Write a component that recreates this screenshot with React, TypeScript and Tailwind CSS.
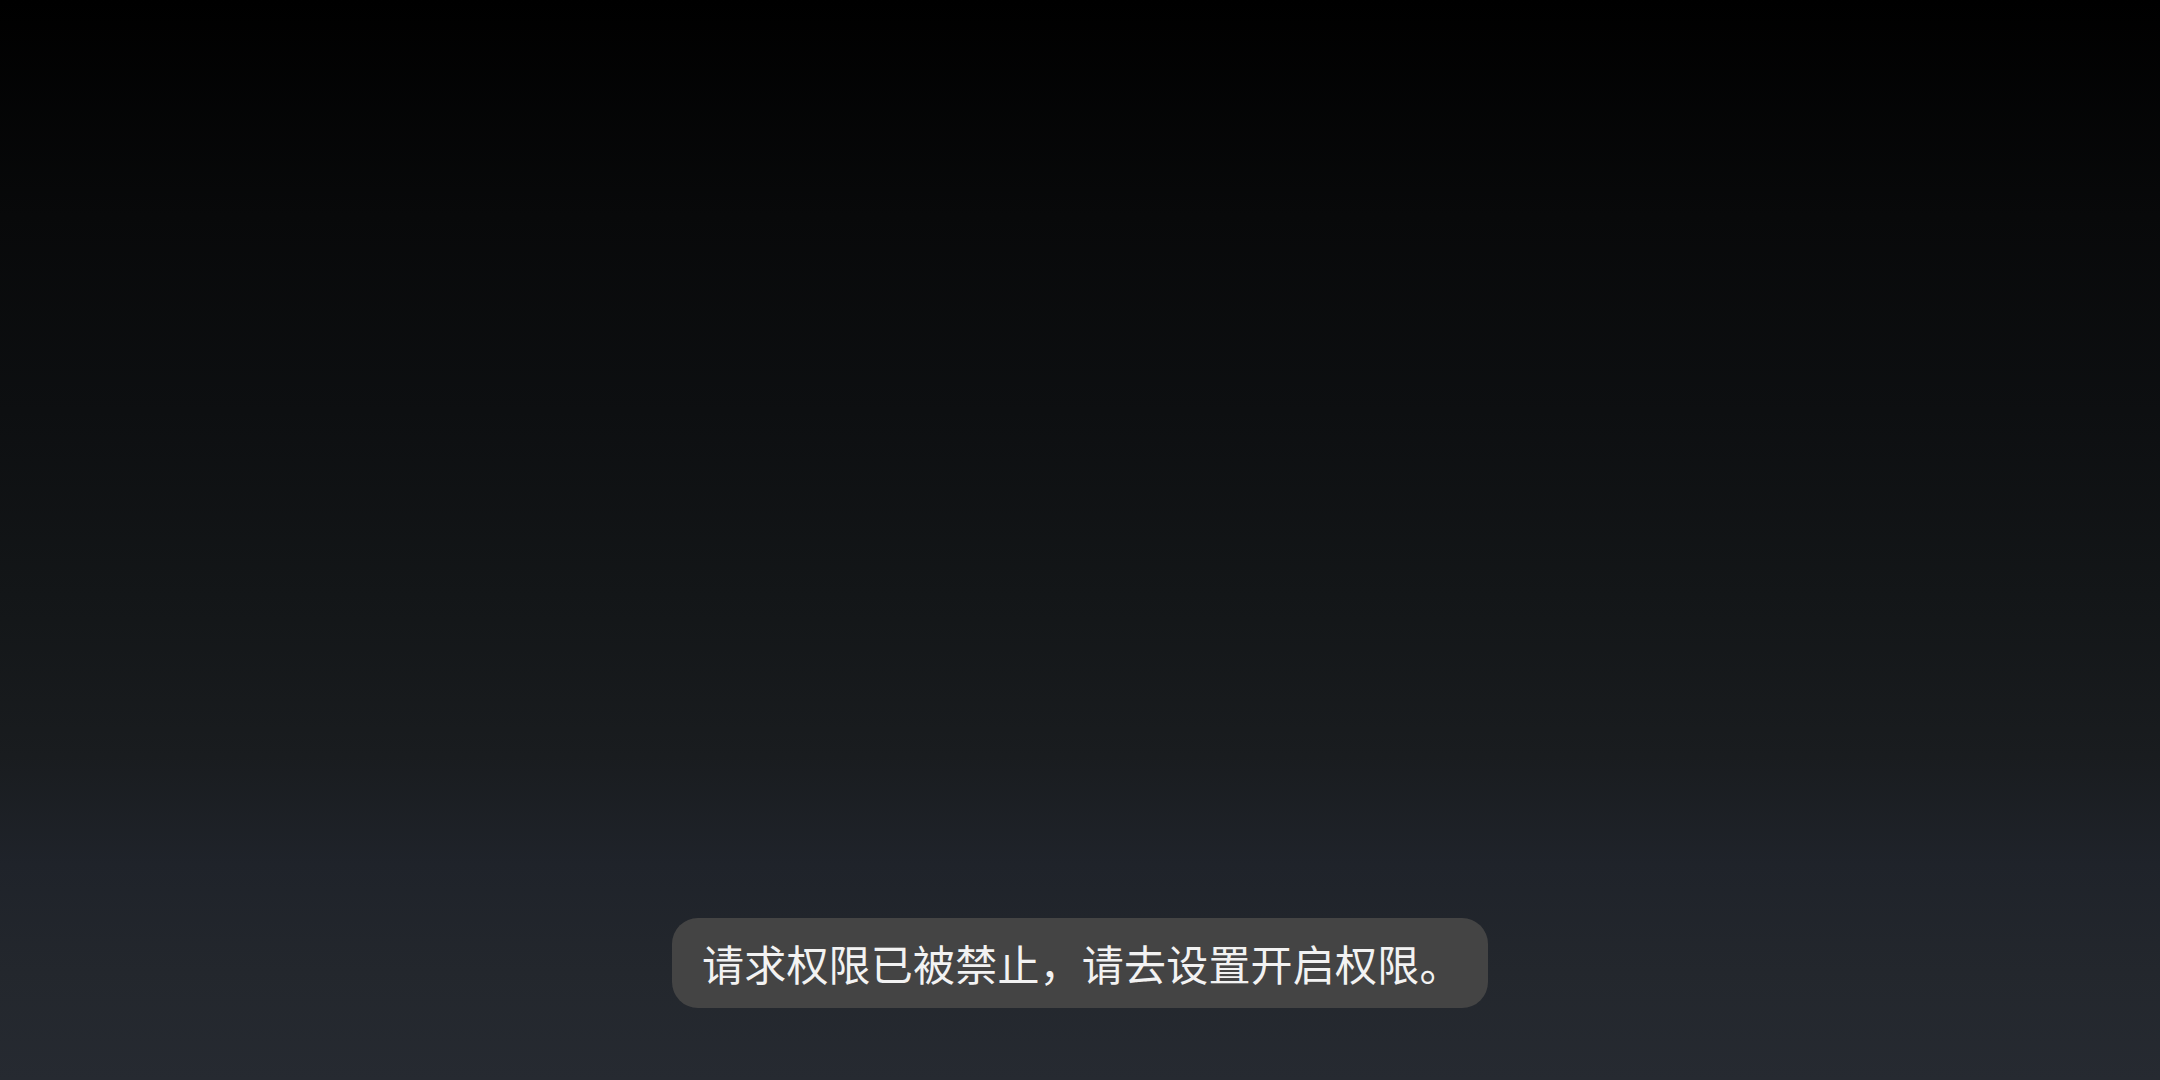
export default function App() {
  return (
    <div className="flex h-[1080px] w-full flex-col items-center justify-end bg-[linear-gradient(to_bottom,#000000_0%,#08090a_20%,#0d0f11_38%,#131618_55%,#191c1f_70%,#1f232a_80%,#23272d_90%,#262a31_100%)] pb-[72px]">
      <div
        className="flex h-[90px] w-[816px] items-center whitespace-nowrap rounded-[26px] bg-[#444444] pl-[30px] text-[42px] leading-none tracking-[0.2px] text-[#f2f2f2]"
        style={{ fontFamily: '"Noto Sans CJK SC", "Noto Sans", sans-serif' }}
      >
        请求权限已被禁止，请去设置开启权限。
      </div>
    </div>
  );
}
